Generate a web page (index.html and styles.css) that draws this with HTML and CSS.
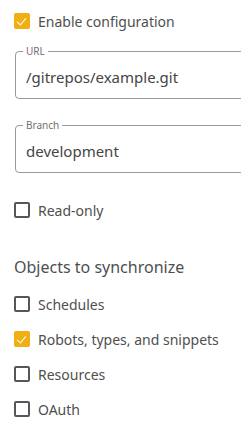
FILE: index.html
```html
<!DOCTYPE html>
<html lang="en">
<head>
  <meta charset="UTF-8">
  <meta name="viewport" content="width=device-width, initial-scale=1.0">
  <title>Git sync</title>
  <link rel="stylesheet" href="styles.css">
</head>
<body>
  <div class="main">
    <label class="check-row first">
      <span class="box checked"></span>
      <span class="label">Enable configuration</span>
    </label>

    <fieldset class="field">
      <legend>URL</legend>
      <div class="value">/gitrepos/example.git</div>
    </fieldset>

    <fieldset class="field">
      <legend>Branch</legend>
      <div class="value">development</div>
    </fieldset>

    <label class="check-row">
      <span class="box"></span>
      <span class="label">Read-only</span>
    </label>

    <h2 class="section">Objects to synchronize</h2>

    <div class="list">
      <label class="check-row">
        <span class="box"></span>
        <span class="label">Schedules</span>
      </label>
      <label class="check-row">
        <span class="box checked"></span>
        <span class="label">Robots, types, and snippets</span>
      </label>
      <label class="check-row">
        <span class="box"></span>
        <span class="label">Resources</span>
      </label>
      <label class="check-row">
        <span class="box"></span>
        <span class="label">OAuth</span>
      </label>
    </div>
  </div>
</body>
</html>
```

FILE: styles.css
```css
* {
  box-sizing: border-box;
  font-family: "Noto Sans", sans-serif;
}
body {
  margin: 0;
  overflow: hidden;
  background-color: white;
  color: #4f4f4f;
}
.main {
  width: 241px;
  padding: 12px 0 0 14px;
}
.check-row {
  display: flex;
  align-items: center;
  gap: 8px;
  height: 18px;
  font-size: 14px;
}
.box {
  width: 16px;
  height: 16px;
  border: 2px solid #56565c;
  border-radius: 2px;
  flex-shrink: 0;
  position: relative;
}
.box.checked {
  border-color: #f0b014;
  background-color: #f0b014;
}
.box.checked::after {
  content: "";
  position: absolute;
  left: 3px;
  top: 1px;
  width: 4px;
  height: 8px;
  border-right: 1.5px solid white;
  border-bottom: 1.5px solid white;
  transform: rotate(40deg);
}
.field {
  width: 260px;
  margin: 16px 0 0 1px;
  padding: 0 7px 0 7px;
  border: 1px solid #9a9a9a;
  border-radius: 4px;
  height: 53px;
}
.field + .field {
  margin-top: 21px;
}
.field legend {
  padding: 0 3px;
  font-size: 10px;
  color: #707070;
  line-height: 10px;
}
.value {
  padding: 11px 0 0 3px;
  font-size: 15px;
  line-height: 20px;
  color: #454545;
}
.field + .check-row {
  margin-top: 28px;
}
.section {
  margin: 37px 0 0 0;
  font-size: 16px;
  font-weight: normal;
  color: #4f4f4f;
}
.list {
  margin-top: 17px;
  display: flex;
  flex-direction: column;
  gap: 17px;
}
```
